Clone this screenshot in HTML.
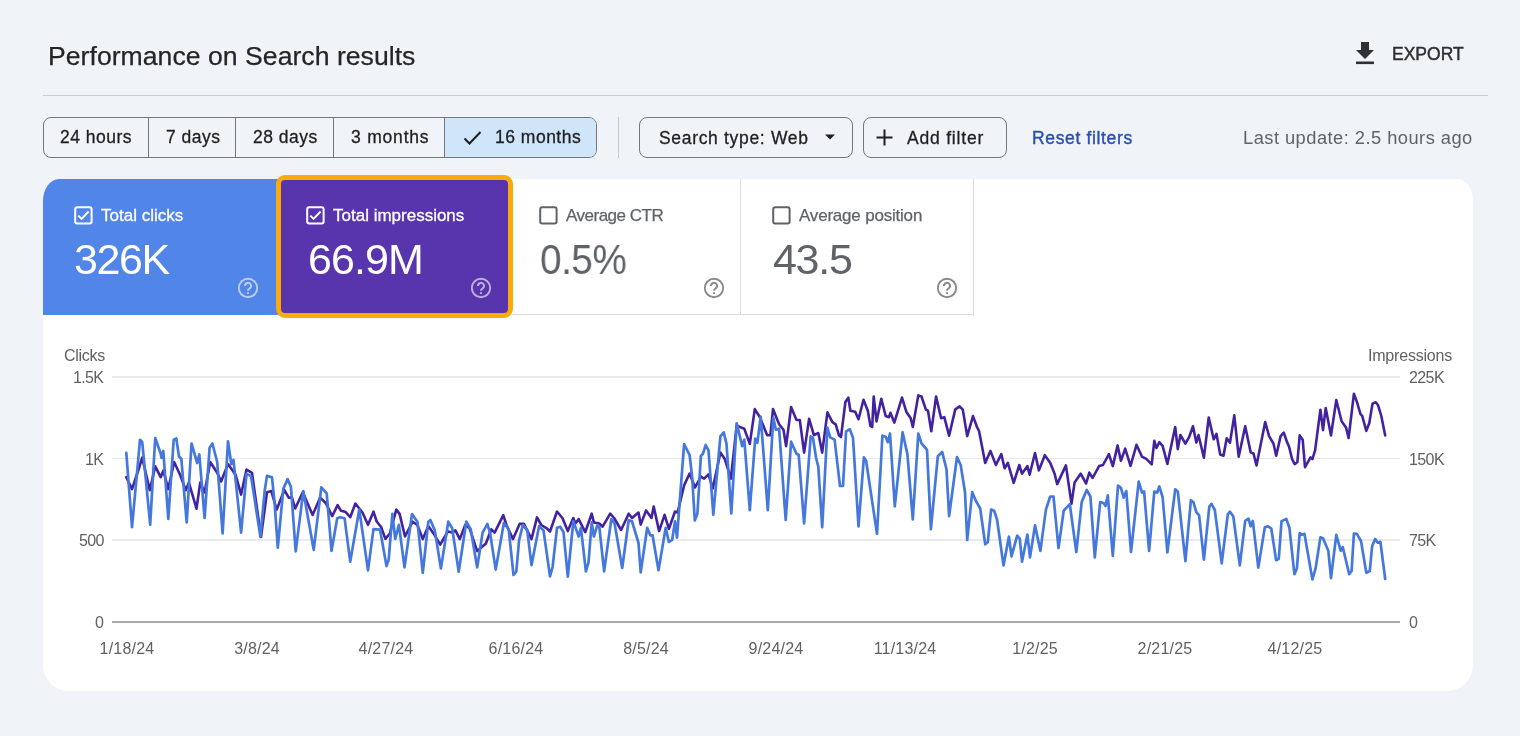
<!DOCTYPE html><html><head><meta charset="utf-8"><style>
html,body{margin:0;padding:0;width:1520px;height:736px;overflow:hidden;background:#f0f4f9;}
body{position:relative;font-family:"Liberation Sans",sans-serif;}
.t{position:absolute;line-height:1;white-space:nowrap;will-change:transform;}
.a{position:absolute;box-sizing:border-box;}
</style></head><body>
<div class="t" style="left:47.6px;top:42.98px;font-size:26.6px;color:#252525;letter-spacing:0.03px;-webkit-text-stroke:0.25px #252525;">Performance on Search results</div>
<div class="a" style="left:43px;top:94.6px;width:1445px;height:1.5px;background:#c8cbcf"></div>
<svg class="a" style="left:1350px;top:36px" width="30" height="32" viewBox="0 0 30 32"><path d="M11 6h8v8h5l-9 9-9-9h5z" fill="#303134"/><rect x="6" y="25.5" width="18" height="2.6" fill="#303134"/></svg>
<div class="t" style="left:1392px;top:45.99px;font-size:17.5px;color:#2d2f31;letter-spacing:0px;-webkit-text-stroke:0.45px #2d2f31;">EXPORT</div>
<div class="a" style="left:43px;top:117px;width:554px;height:41px;border:1.5px solid #757779;border-radius:8px;overflow:hidden;"><div class="a" style="left:400px;top:0;width:152px;height:41px;background:#cfe5fa"></div><div class="a" style="left:103.75px;top:0;width:1.5px;height:41px;background:#757779"></div><div class="a" style="left:190.75px;top:0;width:1.5px;height:41px;background:#757779"></div><div class="a" style="left:288.75px;top:0;width:1.5px;height:41px;background:#757779"></div><div class="a" style="left:399.5px;top:0;width:1.5px;height:41px;background:#757779"></div></div>
<div class="t" style="left:59.5px;top:129.49px;font-size:17.5px;color:#1f1f1f;letter-spacing:0.5px;-webkit-text-stroke:0.3px #1f1f1f;">24 hours</div>
<div class="t" style="left:165.5px;top:129.49px;font-size:17.5px;color:#1f1f1f;letter-spacing:0.5px;-webkit-text-stroke:0.3px #1f1f1f;">7 days</div>
<div class="t" style="left:252.5px;top:129.49px;font-size:17.5px;color:#1f1f1f;letter-spacing:0.5px;-webkit-text-stroke:0.3px #1f1f1f;">28 days</div>
<div class="t" style="left:350.5px;top:129.49px;font-size:17.5px;color:#1f1f1f;letter-spacing:0.8px;-webkit-text-stroke:0.3px #1f1f1f;">3 months</div>
<svg class="a" style="left:462px;top:129px" width="22" height="18" viewBox="0 0 22 18"><path d="M2.5 9.5l5 5 11-11.5" fill="none" stroke="#1f1f1f" stroke-width="2"/></svg>
<div class="t" style="left:494.5px;top:129.49px;font-size:17.5px;color:#1f1f1f;letter-spacing:0.5px;-webkit-text-stroke:0.3px #1f1f1f;">16 months</div>
<div class="a" style="left:618px;top:117px;width:1px;height:41px;background:#c7cacd"></div>
<div class="a" style="left:638.5px;top:117px;width:214px;height:41px;border:1.5px solid #757779;border-radius:8px"></div>
<div class="t" style="left:659px;top:129.69px;font-size:17.5px;color:#1f1f1f;letter-spacing:0.68px;-webkit-text-stroke:0.3px #1f1f1f;">Search type: Web</div>
<svg class="a" style="left:824px;top:133px" width="12" height="8" viewBox="0 0 12 8"><path d="M1 1.5h10l-5 5z" fill="#1f1f1f"/></svg>
<div class="a" style="left:862.5px;top:117px;width:144px;height:41px;border:1.5px solid #757779;border-radius:8px"></div>
<svg class="a" style="left:875px;top:128px" width="19" height="19" viewBox="0 0 19 19"><path d="M9.5 1.5v16M1.5 9.5h16" stroke="#1f1f1f" stroke-width="2"/></svg>
<div class="t" style="left:907px;top:129.69px;font-size:17.5px;color:#1f1f1f;letter-spacing:0.8px;-webkit-text-stroke:0.3px #1f1f1f;">Add filter</div>
<div class="t" style="left:1032px;top:129.79px;font-size:17.5px;color:#2b4fb0;letter-spacing:0.65px;-webkit-text-stroke:0.4px #2b4fb0;">Reset filters</div>
<div class="t" style="right:47.09999999999991px;top:128.71px;font-size:18.3px;color:#5f6368;letter-spacing:0.47px;">Last update: 2.5 hours ago</div>
<div class="a" style="left:43px;top:178.5px;width:1430px;height:512px;background:#fff;border-radius:16px 16px 26px 26px / 22px 22px 26px 26px;overflow:hidden"><div class="a" style="left:0;top:0;width:236px;height:136.5px;background:#5185e8"></div><div class="a" style="left:469px;top:135.6px;width:462px;height:1.2px;background:#dadce0"></div><div class="a" style="left:697px;top:0;width:1px;height:136.5px;background:#dadce0"></div><div class="a" style="left:930px;top:0;width:1px;height:137px;background:#dadce0"></div></div>
<div class="a" style="left:275.5px;top:175.3px;width:237px;height:143px;background:#5835ad;border:5.2px solid #fbaa0c;border-radius:9px"></div>
<svg class="a" style="left:73.5px;top:205.5px" width="19" height="19" viewBox="0 0 19 19"><rect x="1.2" y="1.2" width="16.4" height="16.4" rx="2" fill="none" stroke="#ffffff" stroke-width="2"/><path d="M4.3 9.6l3.3 3.3 7-7.4" fill="none" stroke="#ffffff" stroke-width="2"/></svg>
<div class="t" style="left:100.5px;top:206.61px;font-size:17px;color:#ffffff;-webkit-text-stroke:0.3px #fff;">Total clicks</div>
<div class="t" style="left:74px;top:238.10px;font-size:43px;color:#ffffff;letter-spacing:-1.4px;">326K</div>
<svg class="a" style="left:237.3px;top:277.2px" width="22" height="22" viewBox="0 0 22 22"><circle cx="11" cy="11" r="9.2" fill="none" stroke="rgba(255,255,255,0.6)" stroke-width="1.9"/><path d="M8 9a3 3 0 1 1 4.6 2.4c-1 .6-1.6 1.1-1.6 2.4" fill="none" stroke="rgba(255,255,255,0.6)" stroke-width="2"/><circle cx="11" cy="16.2" r="1.1" fill="rgba(255,255,255,0.6)"/></svg>
<svg class="a" style="left:306px;top:205.5px" width="19" height="19" viewBox="0 0 19 19"><rect x="1.2" y="1.2" width="16.4" height="16.4" rx="2" fill="none" stroke="#ffffff" stroke-width="2"/><path d="M4.3 9.6l3.3 3.3 7-7.4" fill="none" stroke="#ffffff" stroke-width="2"/></svg>
<div class="t" style="left:333px;top:206.61px;font-size:17px;color:#ffffff;-webkit-text-stroke:0.3px #fff;">Total impressions</div>
<div class="t" style="left:308px;top:238.10px;font-size:43px;color:#ffffff;letter-spacing:-0.9px;">66.9M</div>
<svg class="a" style="left:470.2px;top:277.2px" width="22" height="22" viewBox="0 0 22 22"><circle cx="11" cy="11" r="9.2" fill="none" stroke="rgba(255,255,255,0.6)" stroke-width="1.9"/><path d="M8 9a3 3 0 1 1 4.6 2.4c-1 .6-1.6 1.1-1.6 2.4" fill="none" stroke="rgba(255,255,255,0.6)" stroke-width="2"/><circle cx="11" cy="16.2" r="1.1" fill="rgba(255,255,255,0.6)"/></svg>
<svg class="a" style="left:539px;top:205.5px" width="19" height="19" viewBox="0 0 19 19"><rect x="1.2" y="1.2" width="16.4" height="16.4" rx="2" fill="none" stroke="#5f6368" stroke-width="2"/></svg>
<div class="t" style="left:565.5px;top:206.61px;font-size:17px;color:#5f6368;letter-spacing:-0.5px;-webkit-text-stroke:0.25px #5f6368;">Average CTR</div>
<div class="t" style="left:540px;top:238.10px;font-size:43px;color:#5f6368;letter-spacing:-0.5px;transform:scaleX(0.9);transform-origin:0 0;">0.5%</div>
<svg class="a" style="left:703px;top:277.2px" width="22" height="22" viewBox="0 0 22 22"><circle cx="11" cy="11" r="9.2" fill="none" stroke="#8a8a8a" stroke-width="1.9"/><path d="M8 9a3 3 0 1 1 4.6 2.4c-1 .6-1.6 1.1-1.6 2.4" fill="none" stroke="#8a8a8a" stroke-width="2"/><circle cx="11" cy="16.2" r="1.1" fill="#8a8a8a"/></svg>
<svg class="a" style="left:772px;top:205.5px" width="19" height="19" viewBox="0 0 19 19"><rect x="1.2" y="1.2" width="16.4" height="16.4" rx="2" fill="none" stroke="#5f6368" stroke-width="2"/></svg>
<div class="t" style="left:798.5px;top:206.61px;font-size:17px;color:#5f6368;letter-spacing:-0.2px;-webkit-text-stroke:0.25px #5f6368;">Average position</div>
<div class="t" style="left:773px;top:238.10px;font-size:43px;color:#5f6368;letter-spacing:-1.3px;">43.5</div>
<svg class="a" style="left:936px;top:277.2px" width="22" height="22" viewBox="0 0 22 22"><circle cx="11" cy="11" r="9.2" fill="none" stroke="#8a8a8a" stroke-width="1.9"/><path d="M8 9a3 3 0 1 1 4.6 2.4c-1 .6-1.6 1.1-1.6 2.4" fill="none" stroke="#8a8a8a" stroke-width="2"/><circle cx="11" cy="16.2" r="1.1" fill="#8a8a8a"/></svg>
<div class="a" style="left:112px;top:376.25px;width:1288px;height:1.5px;background:#e9eaec"></div>
<div class="a" style="left:112px;top:457.75px;width:1288px;height:1.5px;background:#e9eaec"></div>
<div class="a" style="left:112px;top:539.25px;width:1288px;height:1.5px;background:#e9eaec"></div>
<div class="a" style="left:112px;top:620.7px;width:1288px;height:2px;background:#a8aaab"></div>
<div class="t" style="left:63.5px;top:348.26px;font-size:16px;color:#616161;letter-spacing:-0.3px;">Clicks</div>
<div class="t" style="right:1416.8px;top:370.06px;font-size:16px;color:#616161;letter-spacing:-0.7px;">1.5K</div>
<div class="t" style="right:1416.8px;top:451.56px;font-size:16px;color:#616161;letter-spacing:-0.7px;">1K</div>
<div class="t" style="right:1416.8px;top:533.06px;font-size:16px;color:#616161;letter-spacing:-0.7px;">500</div>
<div class="t" style="right:1416.8px;top:614.66px;font-size:16px;color:#616161;letter-spacing:-0.7px;">0</div>
<div class="t" style="right:67.5px;top:348.26px;font-size:16px;color:#616161;letter-spacing:-0.2px;">Impressions</div>
<div class="t" style="left:1409px;top:370.06px;font-size:16px;color:#616161;letter-spacing:-0.6px;">225K</div>
<div class="t" style="left:1409px;top:451.56px;font-size:16px;color:#616161;letter-spacing:-0.6px;">150K</div>
<div class="t" style="left:1409px;top:533.06px;font-size:16px;color:#616161;letter-spacing:-0.6px;">75K</div>
<div class="t" style="left:1409px;top:614.66px;font-size:16px;color:#616161;letter-spacing:-0.6px;">0</div>
<div class="t" style="left:67.00px;width:120px;text-align:center;top:640.76px;font-size:16px;letter-spacing:0.2px;color:#616161">1/18/24</div>
<div class="t" style="left:196.74px;width:120px;text-align:center;top:640.76px;font-size:16px;letter-spacing:0.2px;color:#616161">3/8/24</div>
<div class="t" style="left:326.48px;width:120px;text-align:center;top:640.76px;font-size:16px;letter-spacing:0.2px;color:#616161">4/27/24</div>
<div class="t" style="left:456.22px;width:120px;text-align:center;top:640.76px;font-size:16px;letter-spacing:0.2px;color:#616161">6/16/24</div>
<div class="t" style="left:585.96px;width:120px;text-align:center;top:640.76px;font-size:16px;letter-spacing:0.2px;color:#616161">8/5/24</div>
<div class="t" style="left:715.70px;width:120px;text-align:center;top:640.76px;font-size:16px;letter-spacing:0.2px;color:#616161">9/24/24</div>
<div class="t" style="left:845.44px;width:120px;text-align:center;top:640.76px;font-size:16px;letter-spacing:0.2px;color:#616161">11/13/24</div>
<div class="t" style="left:975.18px;width:120px;text-align:center;top:640.76px;font-size:16px;letter-spacing:0.2px;color:#616161">1/2/25</div>
<div class="t" style="left:1104.92px;width:120px;text-align:center;top:640.76px;font-size:16px;letter-spacing:0.2px;color:#616161">2/21/25</div>
<div class="t" style="left:1234.66px;width:120px;text-align:center;top:640.76px;font-size:16px;letter-spacing:0.2px;color:#616161">4/12/25</div>
<svg class="a" style="left:0;top:0" width="1520" height="736" viewBox="0 0 1520 736"><polyline points="126.3,477.2 132.0,489.1 138.9,468.5 142.2,457.6 149.8,490.2 155.2,466.3 160.7,477.2 163.3,470.7 168.3,489.1 174.1,462.0 180.2,475.0 185.7,490.2 188.9,482.6 196.5,508.7 200.2,482.6 204.6,492.4 210.2,462.0 217.2,472.8 221.1,481.5 228.0,464.1 235.7,475.0 241.1,494.6 246.5,469.6 252.0,472.8 261.0,537.0 267.0,492.2 271.3,491.1 276.7,509.6 284.3,490.0 288.7,497.6 292.0,497.6 295.2,508.5 302.8,492.2 312.6,515.0 320.2,497.6 325.7,503.0 332.2,516.1 337.6,505.2 340.9,510.7 345.2,511.7 350.2,517.2 355.4,503.5 362.6,512.8 368.0,524.8 373.5,511.7 376.7,521.5 381.1,527.0 385.4,538.9 389.8,533.5 396.3,509.6 399.6,513.9 405.0,536.5 412.6,521.7 417.4,525.0 422.8,539.1 428.3,526.1 433.7,533.7 440.2,544.6 447.8,531.5 452.2,532.6 455.4,530.4 459.8,539.1 465.2,525.0 469.6,528.3 477.2,551.1 485.9,543.5 491.3,529.3 494.6,532.6 503.3,515.2 506.5,525.0 513.0,539.1 519.6,523.9 523.9,523.9 531.5,539.1 537.0,517.4 541.3,525.0 546.7,528.3 550.0,531.5 557.0,511.5 562.4,518.0 567.8,531.1 573.3,518.0 575.4,523.5 578.7,519.1 585.2,532.2 591.7,513.7 593.9,522.4 599.3,523.5 602.6,526.7 610.2,513.7 614.1,518.0 621.1,530.0 628.7,513.7 632.0,518.0 638.5,512.6 640.7,524.6 646.1,510.4 651.5,518.0 653.7,506.5 659.1,531.1 664.6,514.8 668.9,528.9 675.0,511.5 677.6,512.6 684.1,485.4 689.6,473.5 695.0,487.5 700.9,476.5 704.1,478.7 708.5,474.3 712.8,488.5 720.4,452.6 724.8,459.1 730.9,478.7 736.7,425.4 741.1,427.6 744.3,428.7 749.8,443.9 754.8,409.1 759.6,416.7 767.2,435.2 770.4,435.2 773.0,409.1 779.1,424.3 783.5,429.8 786.1,446.1 791.1,407.0 796.5,420.0 799.8,420.0 804.1,452.6 809.1,418.9 813.9,435.2 818.3,433.0 822.2,452.6 827.4,412.4 832.4,422.2 835.7,424.3 838.9,435.2 841.0,437.0 845.4,402.0 848.3,397.6 850.4,410.7 855.2,411.7 858.5,419.3 863.5,399.8 867.8,410.7 870.4,425.9 872.2,427.0 873.7,396.5 876.5,421.5 881.3,398.7 885.7,416.1 888.9,417.2 890.4,412.8 894.3,422.6 902.0,397.6 906.3,411.7 910.7,418.3 912.8,427.0 918.3,395.4 921.5,396.5 925.9,409.6 928.0,410.7 931.3,431.3 936.1,396.5 941.1,418.3 944.3,417.2 949.1,435.7 955.2,409.6 959.6,406.3 962.8,409.6 967.2,436.1 973.0,416.1 977.0,427.0 979.1,431.3 985.2,463.0 990.4,450.9 995.9,465.0 1001.3,454.1 1004.6,468.3 1007.8,462.8 1013.7,482.8 1019.3,465.0 1022.0,473.7 1027.4,466.1 1029.6,474.8 1035.0,453.0 1038.9,470.4 1044.8,455.2 1050.2,462.8 1054.6,473.7 1057.2,484.1 1065.9,465.4 1071.5,503.7 1074.6,482.4 1080.7,473.7 1086.1,483.5 1089.3,472.6 1092.6,478.0 1099.1,466.1 1103.0,465.0 1108.9,454.1 1112.8,466.1 1117.6,445.4 1120.9,460.7 1125.2,448.7 1130.5,465.8 1136.5,444.8 1142.0,456.7 1146.3,458.9 1151.7,464.3 1154.3,440.9 1156.5,448.0 1159.3,442.2 1162.6,445.9 1167.4,463.9 1175.2,427.0 1177.8,449.1 1180.4,435.0 1185.4,443.7 1189.1,437.2 1193.0,426.3 1196.3,442.6 1198.5,435.0 1203.9,457.8 1208.7,417.6 1213.7,439.3 1216.5,433.9 1220.2,454.6 1223.5,455.7 1226.7,438.3 1230.0,442.6 1234.3,415.4 1238.7,456.7 1245.2,426.3 1250.7,452.4 1253.5,453.5 1256.5,465.4 1265.2,422.0 1269.1,436.1 1273.5,443.7 1276.2,455.7 1280.6,436.2 1283.8,432.7 1286.8,441.5 1289.1,446.8 1292.1,459.2 1294.7,464.2 1297.4,461.9 1299.7,435.4 1302.7,439.8 1305.0,467.2 1308.0,461.9 1310.6,457.4 1312.4,459.2 1315.1,450.4 1320.4,409.7 1323.0,430.1 1325.7,408.0 1331.0,435.4 1336.3,400.0 1341.6,421.2 1346.0,427.4 1348.6,438.0 1353.9,393.8 1356.6,400.9 1360.5,414.2 1362.2,415.9 1366.3,430.9 1369.3,423.0 1372.5,403.6 1375.7,402.3 1378.1,405.3 1381.3,415.9 1385.2,435.4" fill="none" stroke="#4322a0" stroke-width="2.6" stroke-linejoin="round" stroke-linecap="round"/><polyline points="126.3,452.8 132.0,527.2 138.0,462.0 140.0,439.8 142.2,442.0 150.2,524.6 155.2,438.0 160.6,453.3 161.5,458.0 163.3,451.0 168.3,518.9 173.7,439.8 176.3,438.5 179.0,456.5 181.3,458.7 186.7,522.4 191.5,443.5 197.2,463.0 199.3,454.3 204.6,518.0 209.6,447.8 212.4,443.5 217.2,462.0 222.6,533.3 228.0,441.3 231.3,464.0 233.5,459.8 241.1,532.6 246.5,473.9 251.0,476.0 260.4,536.7 264.8,490.0 267.0,475.9 272.0,477.4 274.6,503.0 277.8,547.6 283.3,488.9 287.6,479.1 290.9,486.7 295.7,551.3 303.3,491.1 313.7,549.8 321.3,487.4 326.7,493.3 331.5,550.9 337.2,518.3 340.2,517.2 344.6,518.3 350.2,561.7 359.3,509.6 368.0,570.4 373.5,529.1 380.0,529.6 386.5,566.1 388.7,559.6 392.4,513.9 395.2,538.9 398.9,524.8 404.5,567.3 412.0,514.1 417.4,521.7 422.8,572.8 428.3,521.7 430.4,520.0 434.8,530.4 440.9,568.5 448.3,521.7 452.2,528.3 458.7,571.7 466.3,521.7 470.7,529.3 477.2,567.4 482.6,532.6 487.4,523.9 490.2,533.7 495.7,569.6 503.9,522.8 508.7,529.3 513.5,575.0 516.3,571.7 519.1,540.2 522.8,525.0 527.2,530.0 531.5,565.2 539.1,526.1 543.5,530.4 550.0,576.4 552.6,567.0 557.0,527.8 560.2,526.7 563.5,532.2 567.8,576.7 573.3,521.3 578.7,536.5 580.9,527.8 585.9,571.3 588.5,562.6 591.7,522.4 593.9,536.5 597.2,525.7 599.3,526.7 604.1,571.3 611.3,519.1 614.6,523.5 622.2,568.0 628.7,520.2 632.0,521.3 638.5,543.0 640.7,572.4 647.2,527.8 650.4,535.4 652.6,535.4 658.5,570.2 665.7,527.8 668.9,542.0 672.2,539.8 675.0,521.3 677.0,537.6 684.1,444.1 689.6,455.0 692.2,477.6 694.8,520.5 697.4,513.6 700.9,455.9 703.0,453.7 705.7,445.0 708.5,450.4 710.7,479.8 713.3,514.6 720.4,436.3 723.7,432.4 726.5,443.9 731.3,513.5 736.7,423.3 742.2,446.1 744.3,439.6 749.8,510.2 755.2,438.5 757.4,442.8 760.7,416.7 767.8,510.2 773.3,417.8 775.9,429.8 779.1,428.7 785.7,520.0 791.1,441.7 796.5,453.7 798.7,454.8 804.1,523.3 810.7,436.3 813.0,438.0 816.1,458.0 818.3,466.7 822.2,527.2 827.4,427.6 830.2,437.4 834.6,439.6 840.0,486.0 843.0,486.0 846.1,431.3 849.8,429.1 853.0,437.8 858.5,526.5 863.9,457.4 866.1,460.7 877.0,533.9 882.4,435.7 885.7,436.7 887.8,442.2 890.0,433.5 894.8,506.3 902.6,432.4 907.4,454.1 912.8,519.3 918.3,433.5 921.5,443.3 927.0,449.8 930.9,529.1 937.8,456.3 942.2,452.0 946.5,469.3 949.1,516.1 957.0,457.0 960.7,465.0 965.0,492.2 967.2,540.0 972.2,492.2 975.9,500.9 980.2,508.5 985.2,544.3 987.8,542.2 991.1,509.6 994.1,510.7 997.0,519.3 1003.5,565.4 1008.9,536.7 1011.5,556.3 1017.2,535.7 1019.8,538.9 1022.0,561.7 1027.4,534.6 1030.0,557.4 1035.0,525.4 1040.4,550.9 1045.9,509.6 1050.2,496.5 1053.5,496.5 1058.5,548.0 1063.7,510.7 1069.8,504.1 1076.3,552.0 1081.7,502.0 1086.7,490.0 1090.4,496.5 1094.8,557.4 1100.2,502.0 1103.5,503.0 1105.5,506.0 1107.8,495.4 1112.8,555.9 1118.0,485.7 1120.9,487.8 1123.7,497.6 1126.3,491.1 1131.0,552.0 1138.7,481.7 1142.0,492.6 1144.1,491.5 1149.1,550.9 1154.3,491.5 1157.2,492.6 1159.3,486.5 1162.6,497.0 1167.4,552.4 1175.2,489.3 1177.8,491.5 1185.4,561.1 1190.9,500.2 1193.5,502.4 1196.3,512.2 1199.1,515.4 1203.9,559.6 1209.3,506.7 1211.5,503.9 1214.8,510.0 1221.7,563.3 1227.8,514.3 1230.0,511.7 1233.3,516.5 1239.8,565.4 1245.2,520.9 1248.5,518.7 1250.7,526.3 1252.8,520.9 1258.3,567.6 1264.8,527.4 1268.0,526.3 1271.3,528.5 1276.1,560.2 1278.8,558.7 1281.5,521.2 1286.3,518.9 1289.4,527.7 1294.4,574.2 1296.9,568.4 1299.7,533.0 1301.8,534.8 1304.5,533.9 1312.4,579.5 1315.6,568.4 1320.4,537.4 1323.0,538.3 1328.3,550.7 1331.0,578.1 1336.3,534.8 1340.7,550.7 1342.8,547.2 1349.2,574.2 1351.6,571.0 1353.9,533.6 1356.9,533.9 1361.0,541.0 1366.3,572.8 1369.8,571.0 1372.1,546.3 1375.1,538.9 1377.8,542.7 1380.4,541.9 1385.2,579.0" fill="none" stroke="#4578dd" stroke-width="2.7" stroke-linejoin="round" stroke-linecap="round"/></svg>
</body></html>
